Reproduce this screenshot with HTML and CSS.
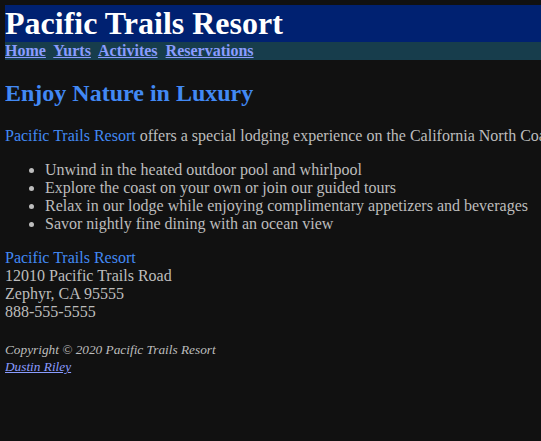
FILE: index.html
```html
<!DOCTYPE html>
<html lang="en">
<head>
<meta charset="utf-8">
<title>Pacific Trails Resort</title>
<link rel="stylesheet" href="styles.css">
</head>
<body>
<div class="wrapper">
  <header class="site-header">
    <h1 class="site-title">Pacific Trails Resort</h1>
  </header>
  <nav class="site-nav">
    <a href="#">Home</a>&nbsp;
    <a href="#">Yurts</a>&nbsp;
    <a href="#">Activites</a>&nbsp;
    <a href="#">Reservations</a>
  </nav>
  <main>
    <h2 class="headline">Enjoy Nature in Luxury</h2>
    <p><span class="resort">Pacific Trails Resort</span> offers a special lodging experience on the California North Coast with panoramic views of the Pacific Ocean.</p>
    <ul class="features">
      <li>Unwind in the heated outdoor pool and whirlpool</li>
      <li>Explore the coast on your own or join our guided tours</li>
      <li>Relax in our lodge while enjoying complimentary appetizers and beverages</li>
      <li>Savor nightly fine dining with an ocean view</li>
    </ul>
    <div class="contact">
      <span class="resort">Pacific Trails Resort</span><br>
      12010 Pacific Trails Road<br>
      Zephyr, CA 95555<br>
      888-555-5555
    </div>
  </main>
  <footer class="site-footer">
    Copyright &copy; 2020 Pacific Trails Resort<br>
    <a href="#">Dustin Riley</a>
  </footer>
</div>
</body>
</html>
```

FILE: styles.css
```css
html {
  overflow: hidden;
  background: #111111;
}
body {
  margin: 5px 0 0 5px;
  font-family: "Liberation Serif", "Times New Roman", serif;
  font-size: 16px;
  color: #bdbdbd;
  background: #111111;
}
.wrapper {
  width: 900px;
  white-space: nowrap;
}
.site-header {
  background: #002171;
}
.site-title {
  margin: 0;
  font-size: 32px;
  color: #ffffff;
}
.site-nav {
  background: #173d4c;
  font-weight: bold;
}
.site-nav a {
  color: #8a9cff;
}
.headline {
  font-size: 24px;
  color: #4289f4;
  margin: 20px 0;
}
.resort {
  color: #4289f4;
}
.features {
  margin: 16px 0;
}
.site-footer {
  margin-top: 20px;
  font-size: 13.3px;
  line-height: 17px;
  font-style: italic;
}
.site-footer a {
  color: #8a9cff;
}
```
